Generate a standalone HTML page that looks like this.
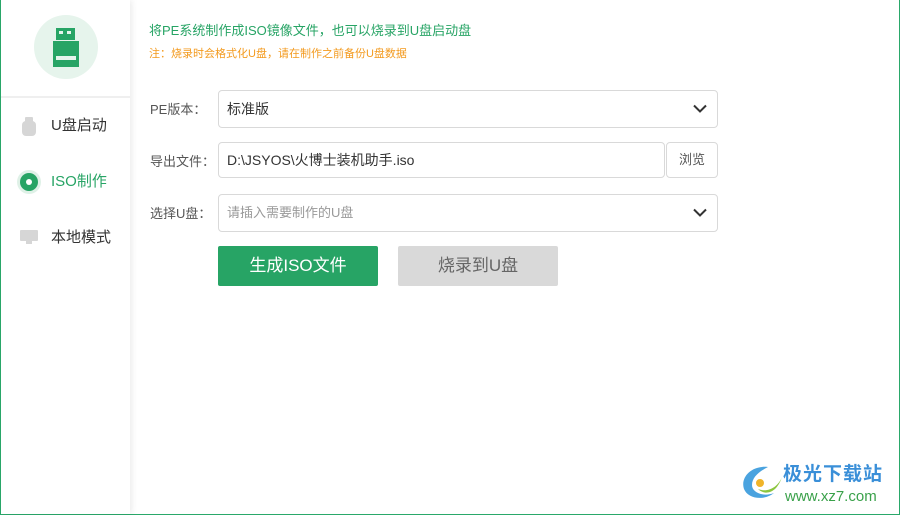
<!DOCTYPE html>
<html><head><meta charset="utf-8"><style>
*{margin:0;padding:0;box-sizing:border-box}
body{width:900px;height:515px;background:#fff;font-family:"Liberation Sans","Noto Sans CJK SC",sans-serif;position:relative;overflow:hidden}
.frame{position:absolute;left:0;top:0;width:900px;height:515px;border:1px solid #2aa86a;border-top:none}
.side{position:absolute;left:1px;top:0;width:129px;height:514px;background:#fff;box-shadow:2px 0 6px rgba(0,0,0,.08)}
.sep{position:absolute;left:0;top:96px;width:129px;height:2px;background:#efefef}
.logo{position:absolute;left:33px;top:15px;width:64px;height:64px;border-radius:50%;background:#e6f4ec}
.nav{position:absolute;left:50px;font-size:15px;line-height:18px;color:#333}
.t{position:absolute;font-size:13px;line-height:16px;color:#555}
.box{position:absolute;border:1px solid #d9d9d9;border-radius:4px;background:#fff;font-size:14px;color:#333;padding-left:8px;display:flex;align-items:center;line-height:16px}
.chev{position:absolute;right:10px;top:50%;margin-top:-5px}
.btn{position:absolute;top:246px;width:160px;height:40px;border-radius:2px;display:flex;align-items:center;justify-content:center;font-size:17px;line-height:20px}
</style></head><body>
<div class="frame"></div>
<div class="side">
 <div class="logo">
  <svg width="64" height="64"><rect x="22" y="13" width="19" height="12" fill="#27a465"/><rect x="25" y="16" width="4" height="3" fill="#e6f4ec"/><rect x="33" y="16" width="4" height="3" fill="#e6f4ec"/><rect x="19" y="26" width="26" height="26" fill="#27a465"/><rect x="22" y="41" width="20" height="4" fill="#e6f4ec"/></svg>
 </div>
 <div class="sep"></div>
 <svg style="position:absolute;left:21px;top:117px" width="14" height="19"><rect x="3" y="0" width="8" height="5" rx="1" fill="#d6d6d6"/><rect x="0" y="4" width="14" height="15" rx="4" fill="#d6d6d6"/></svg>
 <div class="nav" style="top:117px">U盘启动</div>
 <svg style="position:absolute;left:16px;top:170px" width="24" height="24"><circle cx="12" cy="12" r="12" fill="#dff1e7"/><circle cx="12" cy="12" r="9" fill="#27a465"/><circle cx="12" cy="12" r="3" fill="#fff"/></svg>
 <div class="nav" style="top:173px;color:#27a465">ISO制作</div>
 <svg style="position:absolute;left:19px;top:230px" width="18" height="15"><rect x="0" y="0" width="18" height="11" rx="1" fill="#d6d6d6"/><rect x="6" y="11" width="6" height="3" fill="#d6d6d6"/></svg>
 <div class="nav" style="top:229px">本地模式</div>
</div>
<div style="position:absolute;left:149px;top:23px;font-size:13px;line-height:16px;color:#27a465">将PE系统制作成ISO镜像文件，也可以烧录到U盘启动盘</div>
<div style="position:absolute;left:149px;top:47px;font-size:11px;line-height:14px;color:#f39a1e">注：烧录时会格式化U盘，请在制作之前备份U盘数据</div>
<div class="t" style="left:150px;top:102px">PE版本：</div>
<div class="box" style="left:218px;top:90px;width:500px;height:38px">标准版<svg class="chev" width="14" height="9"><path d="M1 1.5L7 7.5L13 1.5" stroke="#333" stroke-width="2" fill="none"/></svg></div>
<div class="t" style="left:150px;top:154px">导出文件：</div>
<div class="box" style="left:218px;top:142px;width:447px;height:36px">D:\JSYOS\火博士装机助手.iso</div>
<div class="box" style="left:666px;top:142px;width:52px;height:36px;padding:0;justify-content:center;font-size:13px;color:#555">浏览</div>
<div class="t" style="left:150px;top:206px">选择U盘：</div>
<div class="box" style="left:218px;top:194px;width:500px;height:38px;font-size:13px;color:#999">请插入需要制作的U盘<svg class="chev" width="14" height="9"><path d="M1 1.5L7 7.5L13 1.5" stroke="#333" stroke-width="2" fill="none"/></svg></div>
<div class="btn" style="left:218px;background:#27a465;color:#fff">生成ISO文件</div>
<div class="btn" style="left:398px;background:#d9d9d9;color:#666">烧录到U盘</div>
<svg style="position:absolute;left:738px;top:463px" width="50" height="40"><path d="M30 4C14 2 2 14 6 26C10 36 26 38 36 30C26 34 14 30 14 22C14 14 22 8 30 4Z" fill="#4aa3df"/><path d="M44 14C40 24 30 30 20 26C26 32 38 32 44 14Z" fill="#8cc63f"/><circle cx="22" cy="20" r="4" fill="#f0b429"/></svg>
<div style="position:absolute;left:783px;top:463px;font-size:19px;line-height:24px;font-weight:bold;color:#3a8fd8;letter-spacing:1px">极光下载站</div>
<div style="position:absolute;left:785px;top:488px;font-size:15px;line-height:18px;color:#3aa14a">www.xz7.com</div>
</body></html>
